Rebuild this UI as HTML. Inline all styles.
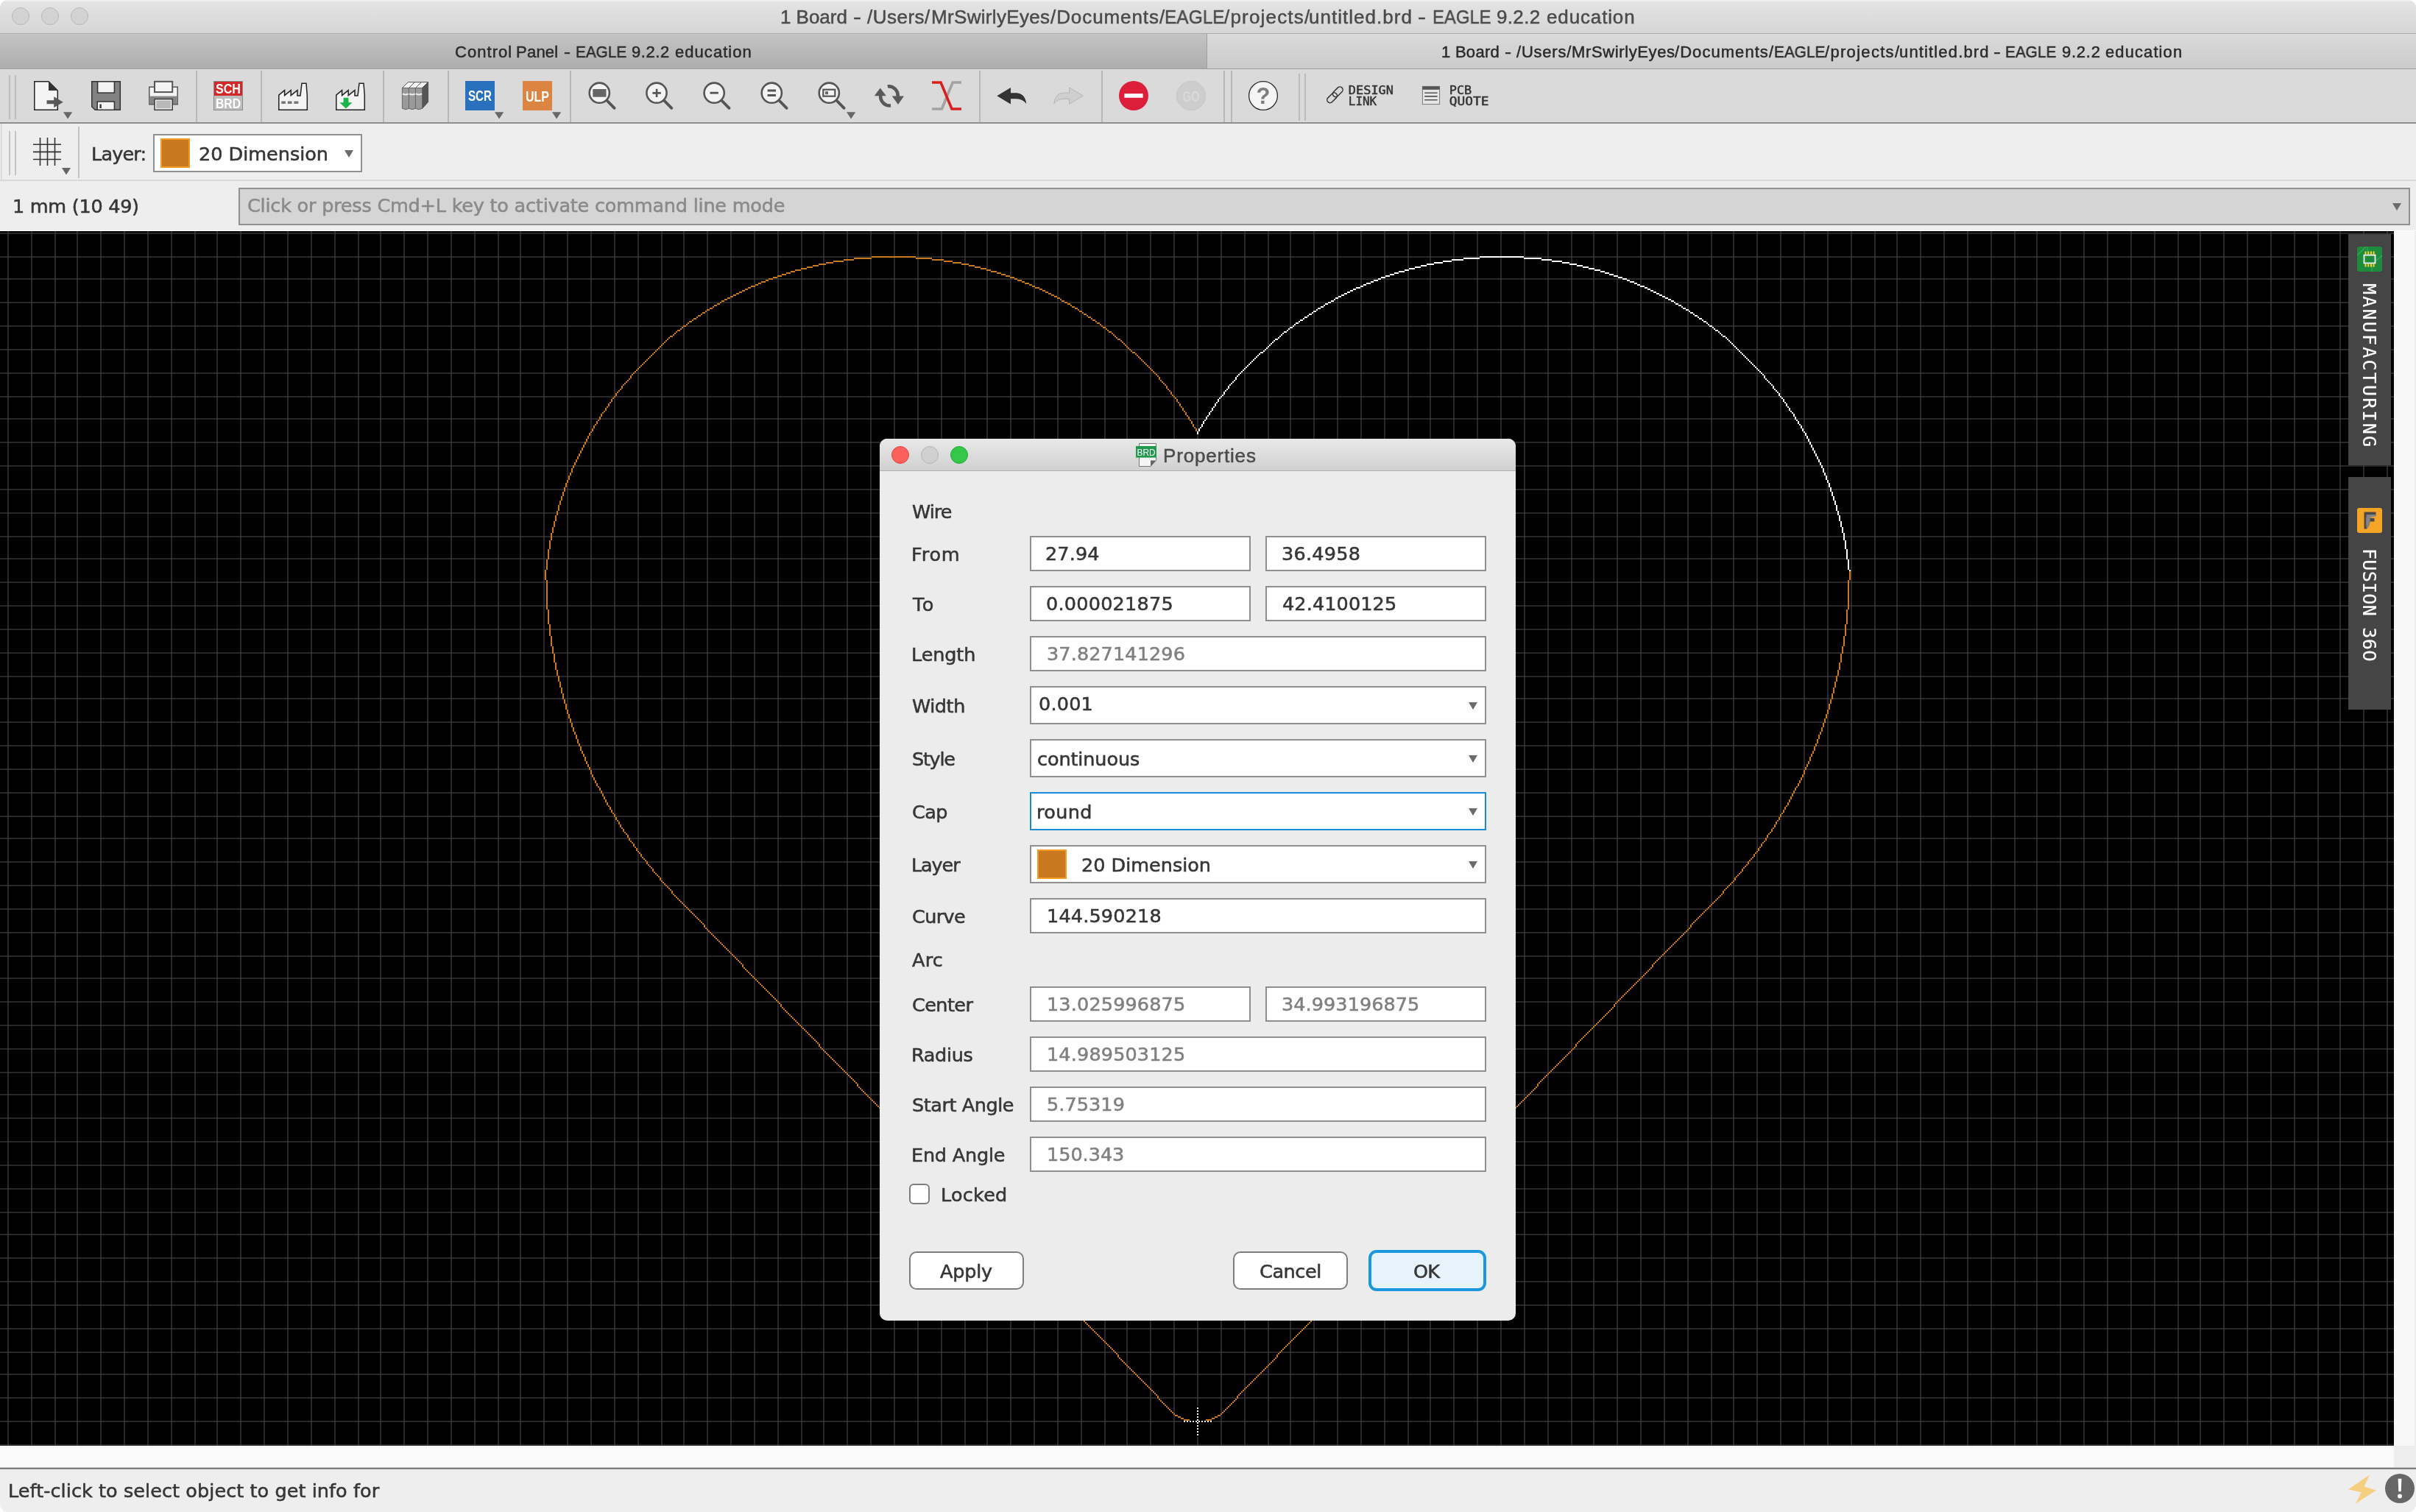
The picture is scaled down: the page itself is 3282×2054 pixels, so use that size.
<!DOCTYPE html><html lang="en"><head><meta charset="utf-8"><title>1 Board - EAGLE 9.2.2 education</title><style>
*{box-sizing:border-box;margin:0;padding:0}
html,body{width:3282px;height:2054px;overflow:hidden;background:#fff}
#win{position:absolute;left:0;top:0;width:3282px;height:2054px;overflow:hidden;border-radius:11px;background:#eee}
.a{position:absolute}
svg{will-change:transform}
.t{position:absolute;white-space:pre;line-height:1;will-change:transform}
.dv{font-family:'DejaVu Sans',sans-serif;-webkit-text-stroke:.55px currentColor}
.ls{font-family:'Liberation Sans',sans-serif;-webkit-text-stroke:.5px currentColor}
#titlebar{left:0;top:0;width:3282px;height:46px;background:linear-gradient(#f4f4f4 0,#e3e3e3 3px,#d6d6d6 45px,#adadad 45px)}
.tl{position:absolute;width:24px;height:24px;border-radius:50%;border:1px solid #b7b7b7;background:#d3d3d3;top:10px}
#tabL{left:0;top:46px;width:1640px;height:47px;background:linear-gradient(#c4c4c4,#adadad);border-right:1px solid #a1a1a1}
#tabR{left:1640px;top:46px;width:1642px;height:47px;background:linear-gradient(#dadada,#cbcbcb)}
#tabline{left:0;top:93px;width:3282px;height:1px;background:#9c9c9c}
#tb1{left:0;top:94px;width:3282px;height:74px;background:#dadada;border-bottom:2px solid #8f8f8f}
#tb2{left:0;top:168px;width:3282px;height:78px;background:#eee;border-bottom:2px solid #d9d9d9}
#cmdrow{left:0;top:246px;width:3282px;height:68px;background:#eee;border-bottom:1px solid #fff}
.combo{position:absolute;background:#fff;border:2px solid #909090}
.sw{position:absolute;width:40px;height:40px;background:#c8781e;border:2px solid #f59a23}
.edit{position:absolute;height:48px;background:#fff;border:2px solid #8f8f8f}
#cmdbox{left:324px;top:255px;width:2950px;height:51px;background:#d5d5d5;border:2px solid #909090}
.arr{position:absolute;width:0;height:0;border-left:6px solid transparent;border-right:6px solid transparent;border-top:10px solid #6b6b6b}
#vsb{left:3252px;top:314px;width:30px;height:1650px;background:#f8f8f8;border-right:2px solid #eee}
#hsb{left:0;top:1964px;width:3252px;height:30px;background:linear-gradient(#f4f4f4,#fbfbfb 4px,#fafafa)}
#corner{left:3252px;top:1964px;width:30px;height:30px;background:#ededed}
#stline{left:0;top:1993px;width:3282px;height:3px;background:linear-gradient(#c9c9c9 0,#c9c9c9 1px,#7d7d7d 1px,#7d7d7d 2.5px,#d0d0d0 3px)}
#status{left:0;top:1996px;width:3282px;height:58px;background:#eee}
.side{position:absolute;left:3190px;width:58px;background:#454545}
.side .ic{position:absolute;left:12px;width:34px;height:34px;border-radius:3px}
.dv0{font-family:'DejaVu Sans',sans-serif}
.vt{position:absolute;white-space:pre;font-family:'DejaVu Sans Mono','Liberation Mono',monospace;color:#fff;transform-origin:0 0;transform:rotate(90deg);line-height:1;will-change:transform;-webkit-text-stroke:.2px #fff}
#dlg{left:1195px;top:596px;width:864px;height:1198px;border-radius:10px;background:#ececec;overflow:hidden}
#dlgbar{left:0;top:0;width:864px;height:44px;background:linear-gradient(#e9e9e9,#d0d0d0);border-bottom:1px solid #b1b1b1}
.dot{position:absolute;width:24px;height:24px;border-radius:50%;top:606px}
.btn{position:absolute;height:52px;border-radius:10px;background:#fff;border:2px solid #7e7e7e}
#ok{left:1859px;top:1698px;width:160px;height:56px;border-radius:11px;background:#e6f3fb;border:4px solid #1a97dd}
#chk{left:1235px;top:1608px;width:28px;height:28px;border-radius:6px;background:#fff;border:2px solid #7e7e7e}
</style></head><body><div id="win">
<div id="titlebar" class="a"><i class="tl" style="left:16px"></i><i class="tl" style="left:56px"></i><i class="tl" style="left:96px"></i></div>
<div class="a" id="wtitle"><span class="t ls" style="left:1059.9px;top:10px;font-size:26px;color:#4b4b4b;letter-spacing:-0.03px;">1 Board </span><span class="t ls" style="left:1158.6px;top:10px;font-size:26px;color:#4b4b4b;transform:scaleX(1.2677);transform-origin:0 0;">- </span><span class="t ls" style="left:1178.4px;top:10px;font-size:26px;color:#4b4b4b;letter-spacing:0.49px;">/Users/</span><span class="t ls" style="left:1265.1px;top:10px;font-size:26px;color:#4b4b4b;letter-spacing:0.33px;">MrSwirlyEyes</span><span class="t ls" style="left:1426.7px;top:10px;font-size:26px;color:#4b4b4b;letter-spacing:0.92px;">/Documents/</span><span class="t ls" style="left:1581.7px;top:10px;font-size:26px;color:#4b4b4b;transform:scaleX(0.9408);transform-origin:0 0;">EAGLE</span><span class="t ls" style="left:1662.6px;top:10px;font-size:26px;color:#4b4b4b;letter-spacing:1.19px;">/projects/</span><span class="t ls" style="left:1778.2px;top:10px;font-size:26px;color:#4b4b4b;letter-spacing:1.03px;">untitled.brd </span><span class="t ls" style="left:1926.2px;top:10px;font-size:26px;color:#4b4b4b;transform:scaleX(1.2677);transform-origin:0 0;">- </span><span class="t ls" style="left:1945.5px;top:10px;font-size:26px;color:#4b4b4b;transform:scaleX(0.9182);transform-origin:0 0;">EAGLE </span><span class="t ls" style="left:2032.9px;top:10px;font-size:26px;color:#4b4b4b;letter-spacing:0.34px;">9.2.2 </span><span class="t ls" style="left:2101.0px;top:10px;font-size:26px;color:#4b4b4b;letter-spacing:0.86px;">education</span></div>
<div id="tabL" class="a"></div><div id="tabR" class="a"></div><div id="tabline" class="a"></div>
<div class="a" id="tab1t"><span class="t ls" style="left:618.4px;top:60px;font-size:22px;color:#2b2b2b;letter-spacing:1.05px;">Control </span><span class="t ls" style="left:701.4px;top:60px;font-size:22px;color:#2b2b2b;letter-spacing:0.24px;">Panel </span><span class="t ls" style="left:766.2px;top:60px;font-size:22px;color:#2b2b2b;transform:scaleX(1.2295);transform-origin:0 0;">- </span><span class="t ls" style="left:781.8px;top:60px;font-size:22px;color:#2b2b2b;transform:scaleX(0.9425);transform-origin:0 0;">EAGLE </span><span class="t ls" style="left:858.3px;top:60px;font-size:22px;color:#2b2b2b;letter-spacing:0.57px;">9.2.2 </span><span class="t ls" style="left:917.0px;top:60px;font-size:22px;color:#2b2b2b;letter-spacing:1.05px;">education</span></div>
<div class="a" id="tab2t"><span class="t ls" style="left:1958.2px;top:60px;font-size:22px;color:#2b2b2b;letter-spacing:0.28px;">1 Board </span><span class="t ls" style="left:2043.5px;top:60px;font-size:22px;color:#2b2b2b;transform:scaleX(1.2464);transform-origin:0 0;">- </span><span class="t ls" style="left:2060.2px;top:60px;font-size:22px;color:#2b2b2b;letter-spacing:0.77px;">/Users/</span><span class="t ls" style="left:2135.2px;top:60px;font-size:22px;color:#2b2b2b;letter-spacing:0.62px;">MrSwirlyEyes</span><span class="t ls" style="left:2275.4px;top:60px;font-size:22px;color:#2b2b2b;letter-spacing:1.05px;">/Documents/</span><span class="t ls" style="left:2409.6px;top:60px;font-size:22px;color:#2b2b2b;transform:scaleX(0.9453);transform-origin:0 0;">EAGLE</span><span class="t ls" style="left:2478.9px;top:60px;font-size:22px;color:#2b2b2b;letter-spacing:1.31px;">/projects/</span><span class="t ls" style="left:2579.6px;top:60px;font-size:22px;color:#2b2b2b;letter-spacing:1.15px;">untitled.brd </span><span class="t ls" style="left:2708.0px;top:60px;font-size:22px;color:#2b2b2b;transform:scaleX(1.3306);transform-origin:0 0;">- </span><span class="t ls" style="left:2724.4px;top:60px;font-size:22px;color:#2b2b2b;transform:scaleX(0.9439);transform-origin:0 0;">EAGLE </span><span class="t ls" style="left:2801.0px;top:60px;font-size:22px;color:#2b2b2b;letter-spacing:0.75px;">9.2.2 </span><span class="t ls" style="left:2859.8px;top:60px;font-size:22px;color:#2b2b2b;letter-spacing:1.09px;">education</span></div>
<div id="tb1" class="a"></div>
<svg class="a" style="left:0;top:94px" width="3282" height="72" viewBox="0 94 3282 72"><rect x="12" y="102" width="2" height="60" fill="#bcbcbc"/><rect x="20" y="102" width="2" height="60" fill="#bcbcbc"/><rect x="1764" y="100" width="2" height="64" fill="#bcbcbc"/><rect x="1772" y="100" width="2" height="64" fill="#bcbcbc"/><rect x="266" y="96" width="2" height="70" fill="#b9b9b9"/><rect x="354" y="96" width="2" height="70" fill="#b9b9b9"/><rect x="520" y="96" width="2" height="70" fill="#b9b9b9"/><rect x="608" y="96" width="2" height="70" fill="#b9b9b9"/><rect x="774" y="96" width="2" height="70" fill="#b9b9b9"/><rect x="1330" y="96" width="2" height="70" fill="#b9b9b9"/><rect x="1496" y="96" width="2" height="70" fill="#b9b9b9"/><rect x="1662" y="96" width="2" height="70" fill="#b9b9b9"/><rect x="1672" y="96" width="2" height="70" fill="#b9b9b9"/><path d="M46.8 110.8H66L78.3 123V149.3H46.8Z" fill="#f4f4f4" stroke="#222" stroke-width="1.5"/><path d="M66 110.8V123H78.3Z" fill="#333"/><path d="M63.5 136.2H73.2V131.3L85.8 138.7L73.2 146.2V141.2H63.5Z" fill="#595959"/><path d="M86 152.2h12.2l-6.1 9.4z" fill="#666"/><path d="M124.8 110.8H163.3V149.3H129.2L124.8 145Z" fill="#828282" stroke="#333" stroke-width="1.5"/><rect x="132.6" y="110.8" width="22.8" height="15.3" fill="#f3f3f3" stroke="#333" stroke-width="1.5"/><rect x="132.2" y="138" width="23.2" height="11.3" fill="#f3f3f3" stroke="#333" stroke-width="1.5"/><rect x="135.4" y="141.6" width="2.4" height="5.4" fill="#333"/><rect x="202.8" y="118.2" width="38.4" height="23.6" fill="#f3f3f3" stroke="#555" stroke-width="1.5"/><rect x="203.5" y="130.6" width="37" height="10.5" fill="#858585"/><rect x="210" y="110.8" width="24.2" height="14.3" fill="#f3f3f3" stroke="#555" stroke-width="2"/><rect x="210" y="134.6" width="24.2" height="14.7" fill="#f3f3f3" stroke="#444" stroke-width="1.6"/><rect x="212.2" y="136.6" width="19.8" height="10.6" fill="#b9b9b9"/><rect x="290" y="110" width="40" height="40" fill="#8a8a8a"/><rect x="291" y="111" width="38" height="19" fill="#d22828"/><rect x="291" y="130" width="38" height="19" fill="#bdbdbd"/><text x="310" y="127" font-family="'Liberation Sans',sans-serif" font-weight="700" font-size="17.5" fill="#fff" text-anchor="middle" textLength="34" lengthAdjust="spacingAndGlyphs">SCH</text><text x="310" y="147" font-family="'Liberation Sans',sans-serif" font-weight="700" font-size="17.5" fill="#fff" text-anchor="middle" textLength="34" lengthAdjust="spacingAndGlyphs">BRD</text><path d="M378.8 149.3V129.2L386.6 122.6V129.6L395.2 122.6V129.6L404 122.6V130H408L410 113.2H416L417.3 130V149.3Z" fill="#f3f3f3" stroke="#222" stroke-width="1.5" stroke-linejoin="miter"/><path d="M382.2 137.5h5.7v3.5h-5.7zM390.8 137.5h5.7v3.5h-5.7zM399.4 137.5h5.9v3.5h-5.9z" fill="#777"/><path d="M456.8 149.3V129.2L464.6 122.6V129.6L473.2 122.6V129.6L482 122.6V130H486L488 113.2H494L495.3 130V149.3Z" fill="#f3f3f3" stroke="#222" stroke-width="1.5" stroke-linejoin="miter"/><path d="M466.6 132.8h6.8v6.4h5l-8.5 8.4l-8.5-8.4h5.2z" fill="#1db44a"/><path d="M573.6 119.5L581.6 111.6V138.6L573.6 147.4Z" fill="#555" stroke="#555" stroke-width="1"/><path d="M546.4 119.5L554.4 111.6H563.4L555.6 119.5Z" fill="#f3f3f3" stroke="#555" stroke-width="1"/><path d="M546.4 119.5H555.6V147.2Q551.0 150.2 546.4 147.2Z" fill="#9a9a9a" stroke="#666" stroke-width="1"/><path d="M546.9 127.4Q551.0 129.6 555.1 127.4" stroke="#eee" stroke-width="2" fill="none"/><path d="M555.4 119.5L563.4 111.6H572.4L564.6 119.5Z" fill="#f3f3f3" stroke="#555" stroke-width="1"/><path d="M555.4 119.5H564.6V147.2Q560.0 150.2 555.4 147.2Z" fill="#9a9a9a" stroke="#666" stroke-width="1"/><path d="M555.9 127.4Q560.0 129.6 564.1 127.4" stroke="#eee" stroke-width="2" fill="none"/><path d="M564.4 119.5L572.4 111.6H581.4L573.6 119.5Z" fill="#f3f3f3" stroke="#555" stroke-width="1"/><path d="M564.4 119.5H573.6V147.2Q569.0 150.2 564.4 147.2Z" fill="#9a9a9a" stroke="#666" stroke-width="1"/><path d="M564.9 127.4Q569.0 129.6 573.1 127.4" stroke="#eee" stroke-width="2" fill="none"/><rect x="632" y="110" width="40" height="40" fill="#2a71bd"/><text x="652" y="137.4" font-family="'Liberation Sans',sans-serif" font-weight="700" font-size="19.5" fill="#fff" text-anchor="middle" textLength="32" lengthAdjust="spacingAndGlyphs">SCR</text><path d="M672 152.2h12.2l-6.1 9.4z" fill="#666"/><rect x="710" y="110" width="40" height="40" fill="#dc8441"/><text x="730" y="137.6" font-family="'Liberation Sans',sans-serif" font-weight="700" font-size="19.5" fill="#fff" text-anchor="middle" textLength="32" lengthAdjust="spacingAndGlyphs">ULP</text><path d="M750 152.2h12.2l-6.1 9.4z" fill="#666"/><g><circle cx="814.3" cy="126.2" r="13.6" fill="#f3f3f3" stroke="#555" stroke-width="2.6"/><path d="M824.9 137.0L834.5999999999999 146.8" stroke="#555" stroke-width="3.9" stroke-linecap="round"/><rect x="805.3" y="121" width="18.2" height="10.7" fill="#666"/></g><g><circle cx="892" cy="126.2" r="13.6" fill="#f3f3f3" stroke="#555" stroke-width="2.6"/><path d="M902.6 137.0L912.3 146.8" stroke="#555" stroke-width="3.9" stroke-linecap="round"/><path d="M886.4 126.4h11.4M892.1 120.7v11.4" stroke="#555" stroke-width="2.6"/></g><g><circle cx="970.2" cy="126.2" r="13.6" fill="#f3f3f3" stroke="#555" stroke-width="2.6"/><path d="M980.8000000000001 137.0L990.5 146.8" stroke="#555" stroke-width="3.9" stroke-linecap="round"/><path d="M964.5 126.2h11.4" stroke="#555" stroke-width="2.8"/></g><g><circle cx="1048.3" cy="126.2" r="13.6" fill="#f3f3f3" stroke="#555" stroke-width="2.6"/><path d="M1058.8999999999999 137.0L1068.6 146.8" stroke="#555" stroke-width="3.9" stroke-linecap="round"/><path d="M1042.6 123h11.4M1042.6 129.5h11.4" stroke="#555" stroke-width="2.8"/></g><g><circle cx="1126.3" cy="126.2" r="13.6" fill="#f3f3f3" stroke="#555" stroke-width="2.6"/><path d="M1136.8999999999999 137.0L1146.6 146.8" stroke="#555" stroke-width="3.9" stroke-linecap="round"/><rect x="1118.3" y="121.7" width="16" height="9" fill="#f3f3f3" stroke="#555" stroke-width="2.2"/><rect x="1121" y="124.2" width="4" height="4" fill="#666"/></g><path d="M1150 152.2h12.2l-6.1 9.4z" fill="#666"/><g fill="none" stroke="#595959" stroke-width="4.6"><path d="M1205.8 117.3A12.6 12.6 0 0 1 1219.6 131"/><path d="M1210 143.4A12.6 12.6 0 0 1 1196.2 129.6"/></g><path d="M1187.8 130.2L1195.7 119.4L1203.8 130.2Z" fill="#595959"/><path d="M1211.8 130.6L1220 142L1228 130.6Z" fill="#595959"/><path d="M1306 112H1294.2L1279.4 148H1266" stroke="#a2a2a2" stroke-width="3.6" fill="none"/><path d="M1266 112H1278L1293 148H1306" stroke="#d8201f" stroke-width="3.6" fill="none"/><path d="M1354.3 130.2L1373 119V126.2H1381Q1392.5 127 1394.3 141Q1389 134.4 1381 134.3H1373V141.4Z" fill="#333"/><path d="M1471.3 130.2L1452.6 119V126.2H1444.6Q1433.1 127 1431.8 141Q1436.6 134.4 1444.6 134.3H1452.6V141.4Z" fill="#cfcfcf" stroke="#b4b4b4" stroke-width="1"/><circle cx="1540" cy="130" r="20" fill="#dc1e3a"/><rect x="1527.4" y="127.2" width="25.2" height="5.6" fill="#fff"/><circle cx="1618" cy="130" r="19.6" fill="#cdcdcd" stroke="#c6c6c6" stroke-width="1"/><text x="1618" y="137.6" font-family="'Liberation Sans',sans-serif" font-weight="700" font-size="21" fill="#dadada" text-anchor="middle" textLength="23" lengthAdjust="spacingAndGlyphs">GO</text><circle cx="1716" cy="130" r="19.4" fill="#f5f5f5" stroke="#2a2a2a" stroke-width="1.3"/><text x="1716" y="141.4" font-family="'Liberation Sans',sans-serif" font-weight="700" font-size="31" fill="#7d7d7d" text-anchor="middle">?</text><g fill="none" stroke="#333" stroke-width="1.5"><rect x="-8" y="-4" width="16" height="8" rx="4" transform="translate(1817.3 124.8) rotate(-45)"/><rect x="-8" y="-4" width="16" height="8" rx="4" transform="translate(1809.6 132.9) rotate(-45)"/></g><text font-family="'DejaVu Sans Mono','Liberation Mono',monospace" font-size="15.2" fill="#333" stroke="#333" stroke-width=".45"><tspan x="1831.8" y="127.6" textLength="61.2" lengthAdjust="spacingAndGlyphs">DESIGN</tspan><tspan x="1831.8" y="142.6" textLength="38.4" lengthAdjust="spacingAndGlyphs">LINK</tspan></text><rect x="1932.4" y="117.4" width="23.2" height="24.2" fill="#e6e6e6" stroke="#777" stroke-width="1"/><rect x="1932.4" y="117.4" width="23.2" height="4.4" fill="#555"/><path d="M1935.2 126.2h17.4M1935.2 130.9h17.4M1935.2 135.7h17.4" stroke="#555" stroke-width="1.6"/><text font-family="'DejaVu Sans Mono','Liberation Mono',monospace" font-size="15.2" fill="#333" stroke="#333" stroke-width=".45"><tspan x="1968.8" y="127.6" textLength="30.4" lengthAdjust="spacingAndGlyphs">PCB</tspan><tspan x="1968.8" y="142.6" textLength="53.8" lengthAdjust="spacingAndGlyphs">QUOTE</tspan></text></svg>
<div id="tb2" class="a"></div>
<svg class="a" style="left:0;top:168px" width="3282" height="76" viewBox="0 168 3282 76"><rect x="12" y="178" width="2" height="60" fill="#c4c4c4"/><rect x="20" y="178" width="2" height="60" fill="#c4c4c4"/><rect x="106" y="172" width="2" height="70" fill="#c4c4c4"/><rect x="1" y="168" width="1.5" height="76" fill="#d6d6d6"/><path d="M54.5 187v38M64.5 187v38M74.5 187v38M45 196.3h38M45 206.4h38M45 216.5h38" stroke="#333" stroke-width="1.6" fill="none"/><path d="M84 228.1h12l-6.0 9.3z" fill="#666"/></svg>
<span class="t dv" style="left:124.0px;top:197px;font-size:25.5px;color:#363636;letter-spacing:-0.82px;">Layer:</span>
<div class="combo" style="left:208px;top:182px;width:284px;height:52px"></div><i class="sw" style="left:218px;top:188px"></i>
<span class="t dv" style="left:269.6px;top:197px;font-size:25.5px;color:#363636;letter-spacing:-0.01px;">20 Dimension</span>
<i class="arr" style="left:468px;top:204px"></i>
<div id="cmdrow" class="a"></div><div id="cmdbox" class="a"></div>
<span class="t dv" style="left:16.6px;top:268px;font-size:25.5px;color:#363636;letter-spacing:-0.27px;">1 mm (10 49)</span>
<span class="t dv" style="left:336.0px;top:267px;font-size:25.5px;color:#8a8a8a;letter-spacing:-0.21px;">Click or press Cmd+L key to activate command line mode</span>
<i class="arr" style="left:3250px;top:276px"></i>
<svg class="cv" width="3252" height="1650" viewBox="0 0 3252 1650" shape-rendering="crispEdges" style="position:absolute;left:0px;top:314px;background:#000"><path d="M11 0V1650M43 0V1650M75 0V1650M105 0V1650M137 0V1650M169 0V1650M201 0V1650M233 0V1650M265 0V1650M295 0V1650M327 0V1650M359 0V1650M391 0V1650M423 0V1650M455 0V1650M487 0V1650M517 0V1650M549 0V1650M581 0V1650M613 0V1650M645 0V1650M677 0V1650M707 0V1650M739 0V1650M771 0V1650M803 0V1650M835 0V1650M867 0V1650M899 0V1650M929 0V1650M961 0V1650M993 0V1650M1025 0V1650M1057 0V1650M1089 0V1650M1119 0V1650M1151 0V1650M1183 0V1650M1215 0V1650M1247 0V1650M1279 0V1650M1311 0V1650M1341 0V1650M1373 0V1650M1405 0V1650M1437 0V1650M1469 0V1650M1501 0V1650M1531 0V1650M1563 0V1650M1595 0V1650M1627 0V1650M1659 0V1650M1691 0V1650M1723 0V1650M1753 0V1650M1785 0V1650M1817 0V1650M1849 0V1650M1881 0V1650M1913 0V1650M1943 0V1650M1975 0V1650M2007 0V1650M2039 0V1650M2071 0V1650M2103 0V1650M2135 0V1650M2165 0V1650M2197 0V1650M2229 0V1650M2261 0V1650M2293 0V1650M2325 0V1650M2355 0V1650M2387 0V1650M2419 0V1650M2451 0V1650M2483 0V1650M2515 0V1650M2547 0V1650M2577 0V1650M2609 0V1650M2641 0V1650M2673 0V1650M2705 0V1650M2737 0V1650M2767 0V1650M2799 0V1650M2831 0V1650M2863 0V1650M2895 0V1650M2927 0V1650M2959 0V1650M2989 0V1650M3021 0V1650M3053 0V1650M3085 0V1650M3117 0V1650M3149 0V1650M3179 0V1650M3211 0V1650M3243 0V1650" stroke="#282828" stroke-width="2" fill="none"/><path d="M0 3H3252M0 35H3252M0 65H3252M0 97H3252M0 129H3252M0 161H3252M0 193H3252M0 225H3252M0 255H3252M0 287H3252M0 319H3252M0 351H3252M0 383H3252M0 415H3252M0 445H3252M0 477H3252M0 509H3252M0 541H3252M0 573H3252M0 605H3252M0 635H3252M0 667H3252M0 699H3252M0 731H3252M0 763H3252M0 795H3252M0 825H3252M0 857H3252M0 889H3252M0 921H3252M0 953H3252M0 985H3252M0 1015H3252M0 1047H3252M0 1079H3252M0 1111H3252M0 1143H3252M0 1173H3252M0 1205H3252M0 1237H3252M0 1269H3252M0 1301H3252M0 1333H3252M0 1363H3252M0 1395H3252M0 1427H3252M0 1459H3252M0 1491H3252M0 1523H3252M0 1553H3252M0 1585H3252M0 1617H3252M0 1649H3252" stroke="#434343" stroke-opacity=".6" stroke-width="2" fill="none"/><path d="M740 460h2v2h-2zm2 -14h2v14h-2zm2 -14h2v14h-2zm2 -12h2v12h-2zm2 -10h2v10h-2zm2 -8h2v8h-2zm2 -8h2v8h-2zm2 -8h2v8h-2zm2 -6h2v6h-2zm2 -8h2v8h-2zm2 -6h2v6h-2zm2 -6h2v6h-2zm2 -6h2v6h-2zm2 -6h2v6h-2zm2 -6h2v6h-2zm2 -4h2v4h-2zm2 -6h2v6h-2zm2 -4h2v4h-2zm2 -6h2v6h-2zm2 -4h2v4h-2zm2 -4h2v4h-2zm2 -4h2v4h-2zm2 -4h2v4h-2zm2 -4h2v4h-2zm2 -4h2v4h-2zm2 -4h2v4h-2zm2 -4h2v4h-2zm2 -4h2v4h-2zm2 -4h2v4h-2zm2 -4h2v4h-2zm2 -4h2v4h-2zm2 -2h2v2h-2zm2 -4h2v4h-2zm2 -4h2v4h-2zm2 -2h2v2h-2zm2 -4h2v4h-2zm2 -2h2v2h-2zm2 -4h2v4h-2zm2 -4h2v4h-2zm2 -2h2v2h-2zm2 -2h2v2h-2zm2 -4h2v4h-2zm2 -2h2v2h-2zm2 -4h2v4h-2zm2 -2h2v2h-2zm2 -4h2v4h-2zm2 -2h2v2h-2zm2 -2h2v2h-2zm2 -4h2v4h-2zm2 -2h2v2h-2zm2 -2h2v2h-2zm2 -2h2v2h-2zm2 -4h2v4h-2zm2 -2h2v2h-2zm2 -2h2v2h-2zm2 -2h2v2h-2zm2 -2h2v2h-2zm2 -2h2v2h-2zm2 -4h2v4h-2zm2 -2h2v2h-2zm2 -2h2v2h-2zm2 -2h2v2h-2zm2 -2h2v2h-2zm2 -2h2v2h-2zm2 -2h2v2h-2zm2 -2h2v2h-2zm2 -2h2v2h-2zm2 -2h2v2h-2zm2 -2h2v2h-2zm2 -2h2v2h-2zm2 -2h2v2h-2zm2 -2h2v2h-2zm2 -2h2v2h-2zm2 -2h2v2h-2zm2 -2h2v2h-2zm2 -2h2v2h-2zm2 -2h2v2h-2zm2 -2h2v2h-2zm2 -2h2v2h-2zm2 -2h2v2h-2zm2 -2h2v2h-2zm2 -2h2v2h-2zm2 -2h2v2h-2zm2 -2h2v2h-2zm2 -2h2v2h-2zm2 -2h4v2h-4zm4 -2h2v2h-2zm2 -2h2v2h-2zm2 -2h2v2h-2zm2 -2h4v2h-4zm4 -2h2v2h-2zm2 -2h2v2h-2zm2 -2h4v2h-4zm4 -2h2v2h-2zm2 -2h2v2h-2zm2 -2h4v2h-4zm4 -2h2v2h-2zm2 -2h4v2h-4zm4 -2h2v2h-2zm2 -2h4v2h-4zm4 -2h2v2h-2zm2 -2h4v2h-4zm4 -2h2v2h-2zm2 -2h4v2h-4zm4 -2h4v2h-4zm4 -2h2v2h-2zm2 -2h4v2h-4zm4 -2h4v2h-4zm4 -2h2v2h-2zm2 -2h4v2h-4zm4 -2h4v2h-4zm4 -2h4v2h-4zm4 -2h4v2h-4zm4 -2h4v2h-4zm4 -2h4v2h-4zm4 -2h4v2h-4zm4 -2h4v2h-4zm4 -2h4v2h-4zm4 -2h4v2h-4zm4 -2h6v2h-6zm6 -2h4v2h-4zm4 -2h4v2h-4zm4 -2h6v2h-6zm6 -2h4v2h-4zm4 -2h6v2h-6zm6 -2h6v2h-6zm6 -2h6v2h-6zm6 -2h6v2h-6zm6 -2h6v2h-6zm6 -2h6v2h-6zm6 -2h8v2h-8zm8 -2h8v2h-8zm8 -2h8v2h-8zm8 -2h8v2h-8zm8 -2h10v2h-10zm10 -2h10v2h-10zm10 -2h14v2h-14zm14 -2h14v2h-14zm14 -2h24v2h-24zm24 -2h60v2h-60zm60 2h22v2h-22zm22 2h16v2h-16zm16 2h12v2h-12zm12 2h12v2h-12zm12 2h10v2h-10zm10 2h8v2h-8zm8 2h8v2h-8zm8 2h8v2h-8zm8 2h6v2h-6zm6 2h8v2h-8zm8 2h6v2h-6zm6 2h6v2h-6zm6 2h6v2h-6zm6 2h6v2h-6zm6 2h4v2h-4zm4 2h6v2h-6zm6 2h4v2h-4zm4 2h6v2h-6zm6 2h4v2h-4zm4 2h4v2h-4zm4 2h6v2h-6zm6 2h4v2h-4zm4 2h4v2h-4zm4 2h4v2h-4zm4 2h4v2h-4zm4 2h4v2h-4zm4 2h4v2h-4zm4 2h4v2h-4zm4 2h2v2h-2zm2 2h4v2h-4zm4 2h4v2h-4zm4 2h4v2h-4zm4 2h2v2h-2zm2 2h4v2h-4zm4 2h4v2h-4zm4 2h2v2h-2zm2 2h4v2h-4zm4 2h2v2h-2zm2 2h4v2h-4zm4 2h2v2h-2zm2 2h4v2h-4zm4 2h2v2h-2zm2 2h4v2h-4zm4 2h2v2h-2zm2 2h4v2h-4zm4 2h2v2h-2zm2 2h2v2h-2zm2 2h4v2h-4zm4 2h2v2h-2zm2 2h2v2h-2zm2 2h4v2h-4zm4 2h2v2h-2zm2 2h2v2h-2zm2 2h2v2h-2zm2 2h2v2h-2zm2 2h4v2h-4zm4 2h2v2h-2zm2 2h2v2h-2zm2 2h2v2h-2zm2 2h2v2h-2zm2 2h2v2h-2zm2 2h2v2h-2zm2 2h2v2h-2zm2 2h2v2h-2zm2 2h4v2h-4zm4 2h2v2h-2zm2 2h2v2h-2zm2 2h2v2h-2zm2 2h2v2h-2zm2 2h2v2h-2zm2 2h2v2h-2zm2 2h2v2h-2zm2 2h2v2h-2zm2 2h2v2h-2zm2 2h2v2h-2zm2 2h2v2h-2zm2 2h2v2h-2zm2 2h2v2h-2zm2 2h2v2h-2zm2 2h2v2h-2zm2 2h2v2h-2zm2 2h2v4h-2zm2 4h2v2h-2zm2 2h2v2h-2zm2 2h2v2h-2zm2 2h2v2h-2zm2 2h2v4h-2zm2 4h2v2h-2zm2 2h2v2h-2zm2 2h2v4h-2zm2 4h2v2h-2zm2 2h2v2h-2zm2 2h2v2h-2zm2 2h2v4h-2zm2 4h2v2h-2zm2 2h2v4h-2zm2 4h2v2h-2zm2 2h2v4h-2zm2 4h2v2h-2zm2 2h2v4h-2zm2 4h2v2h-2zm2 2h2v4h-2zm2 4h2v2h-2zm2 2h2v4h-2zm2 4h2v4h-2zm2 4h2v2h-2zm2 2h2v4h-2zm2 4h2v4h-2zm-886 188h2v14h-2zm2 14h2v40h-2zm2 40h2v20h-2zm2 20h2v16h-2zm2 16h2v14h-2zm2 14h2v10h-2zm2 10h2v12h-2zm2 12h2v10h-2zm2 10h2v8h-2zm2 8h2v8h-2zm2 8h2v8h-2zm2 8h2v8h-2zm2 8h2v8h-2zm2 8h2v6h-2zm2 6h2v8h-2zm2 8h2v6h-2zm2 6h2v6h-2zm2 6h2v6h-2zm2 6h2v6h-2zm2 6h2v6h-2zm2 6h2v4h-2zm2 4h2v6h-2zm2 6h2v6h-2zm2 6h2v4h-2zm2 4h2v6h-2zm2 6h2v4h-2zm2 4h2v4h-2zm2 4h2v6h-2zm2 6h2v4h-2zm2 4h2v4h-2zm2 4h2v4h-2zm2 4h2v6h-2zm2 6h2v4h-2zm2 4h2v4h-2zm2 4h2v4h-2zm2 4h2v4h-2zm2 4h2v2h-2zm2 2h2v4h-2zm2 4h2v4h-2zm2 4h2v4h-2zm2 4h2v4h-2zm2 4h2v4h-2zm2 4h2v4h-2zm2 4h2v2h-2zm2 2h2v4h-2zm2 4h2v4h-2zm2 4h2v2h-2zm2 2h2v4h-2zm2 4h2v4h-2zm2 4h2v2h-2zm2 2h2v4h-2zm2 4h2v4h-2zm2 4h2v2h-2zm2 2h2v4h-2zm2 4h2v2h-2zm2 2h2v2h-2zm2 2h2v4h-2zm2 4h2v4h-2zm2 4h2v2h-2zm2 2h2v2h-2zm2 2h2v4h-2zm2 4h2v2h-2zm2 2h2v4h-2zm2 4h2v2h-2zm2 2h2v2h-2zm2 2h2v4h-2zm2 4h2v2h-2zm2 2h2v2h-2zm2 2h2v2h-2zm2 2h2v4h-2zm2 4h2v2h-2zm2 2h2v2h-2zm2 2h2v2h-2zm2 2h2v4h-2zm2 4h2v2h-2zm2 2h2v2h-2zm2 2h2v2h-2zm2 2h2v2h-2zm2 2h2v4h-2zm2 4h2v2h-2zm2 2h2v2h-2zm2 2h2v2h-2zm2 2h2v2h-2zm2 2h2v2h-2zm2 2h2v2h-2zm2 2h2v2h-2zm2 2h2v4h-2zm2 4h2v2h-2zm2 2h2v2h-2zm2 2h2v2h-2zm2 2h2v2h-2zm2 2h2v2h-2zm2 2h2v2h-2zm2 2h2v2h-2zm2 2h2v2h-2zm2 2h2v2h-2zm2 2h2v2h-2zm2 2h2v2h-2zm2 2h2v2h-2zm2 2h2v2h-2zm2 2h2v2h-2zm2 2h2v2h-2zm2 2h2v2h-2zm2 2h2v2h-2zm2 2h2v2h-2zm2 2h2v2h-2zm2 2h2v2h-2zm2 2h2v2h-2zm2 2h2v4h-2zm2 4h2v2h-2zm2 2h2v2h-2zm2 2h2v2h-2zm2 2h2v2h-2zm2 2h2v2h-2zm2 2h2v2h-2zm2 2h2v2h-2zm2 2h2v2h-2zm2 2h2v2h-2zm2 2h2v2h-2zm2 2h2v2h-2zm2 2h2v2h-2zm2 2h2v2h-2zm2 2h2v2h-2zm2 2h2v2h-2zm2 2h2v2h-2zm2 2h2v2h-2zm2 2h2v2h-2zm2 2h2v2h-2zm2 2h2v2h-2zm2 2h2v2h-2zm2 2h2v2h-2zm2 2h2v2h-2zm2 2h2v2h-2zm2 2h2v2h-2zm2 2h2v4h-2zm2 4h2v2h-2zm2 2h2v2h-2zm2 2h2v2h-2zm2 2h2v2h-2zm2 2h2v2h-2zm2 2h2v2h-2zm2 2h2v2h-2zm2 2h2v2h-2zm2 2h2v2h-2zm2 2h2v2h-2zm2 2h2v2h-2zm2 2h2v2h-2zm2 2h2v2h-2zm2 2h2v2h-2zm2 2h2v2h-2zm2 2h2v2h-2zm2 2h2v2h-2zm2 2h2v2h-2zm2 2h2v2h-2zm2 2h2v2h-2zm2 2h2v2h-2zm2 2h2v2h-2zm2 2h2v2h-2zm2 2h2v2h-2zm2 2h2v2h-2zm2 2h2v4h-2zm2 4h2v2h-2zm2 2h2v2h-2zm2 2h2v2h-2zm2 2h2v2h-2zm2 2h2v2h-2zm2 2h2v2h-2zm2 2h2v2h-2zm2 2h2v2h-2zm2 2h2v2h-2zm2 2h2v2h-2zm2 2h2v2h-2zm2 2h2v2h-2zm2 2h2v2h-2zm2 2h2v2h-2zm2 2h2v2h-2zm2 2h2v2h-2zm2 2h2v2h-2zm2 2h2v2h-2zm2 2h2v2h-2zm2 2h2v2h-2zm2 2h2v2h-2zm2 2h2v2h-2zm2 2h2v2h-2zm2 2h2v2h-2zm2 2h2v2h-2zm2 2h2v4h-2zm2 4h2v2h-2zm2 2h2v2h-2zm2 2h2v2h-2zm2 2h2v2h-2zm2 2h2v2h-2zm2 2h2v2h-2zm2 2h2v2h-2zm2 2h2v2h-2zm2 2h2v2h-2zm2 2h2v2h-2zm2 2h2v2h-2zm2 2h2v2h-2zm2 2h2v2h-2zm2 2h2v2h-2zm2 2h2v2h-2zm2 2h2v2h-2zm2 2h2v2h-2zm2 2h2v2h-2zm2 2h2v2h-2zm2 2h2v2h-2zm2 2h2v2h-2zm2 2h2v2h-2zm2 2h2v2h-2zm2 2h2v2h-2zm2 2h2v2h-2zm2 2h2v4h-2zm2 4h2v2h-2zm2 2h2v2h-2zm2 2h2v2h-2zm2 2h2v2h-2zm2 2h2v2h-2zm2 2h2v2h-2zm2 2h2v2h-2zm2 2h2v2h-2zm2 2h2v2h-2zm2 2h2v2h-2zm2 2h2v2h-2zm2 2h2v2h-2zm2 2h2v2h-2zm2 2h2v2h-2zm2 2h2v2h-2zm2 2h2v2h-2zm2 2h2v2h-2zm2 2h2v2h-2zm2 2h2v2h-2zm2 2h2v2h-2zm2 2h2v2h-2zm2 2h2v2h-2zm2 2h2v2h-2zm2 2h2v2h-2zm2 2h2v2h-2zm2 2h2v4h-2zm2 4h2v2h-2zm2 2h2v2h-2zm2 2h2v2h-2zm2 2h2v2h-2zm2 2h2v2h-2zm2 2h2v2h-2zm2 2h2v2h-2zm2 2h2v2h-2zm2 2h2v2h-2zm2 2h2v2h-2zm2 2h2v2h-2zm2 2h2v2h-2zm2 2h2v2h-2zm2 2h2v2h-2zm2 2h2v2h-2zm2 2h2v2h-2zm2 2h2v2h-2zm2 2h2v2h-2zm2 2h2v2h-2zm2 2h2v2h-2zm2 2h2v2h-2zm2 2h2v2h-2zm2 2h2v2h-2zm2 2h2v2h-2zm2 2h2v2h-2zm2 2h2v4h-2zm2 4h2v2h-2zm2 2h2v2h-2zm2 2h2v2h-2zm2 2h2v2h-2zm2 2h2v2h-2zm2 2h2v2h-2zm2 2h2v2h-2zm2 2h2v2h-2zm2 2h2v2h-2zm2 2h2v2h-2zm2 2h2v2h-2zm2 2h2v2h-2zm2 2h2v2h-2zm2 2h2v2h-2zm2 2h2v2h-2zm2 2h2v2h-2zm2 2h2v2h-2zm2 2h2v2h-2zm2 2h2v2h-2zm2 2h2v2h-2zm2 2h2v2h-2zm2 2h2v2h-2zm2 2h2v2h-2zm2 2h2v2h-2zm2 2h2v2h-2zm2 2h2v4h-2zm2 4h2v2h-2zm2 2h2v2h-2zm2 2h2v2h-2zm2 2h2v2h-2zm2 2h2v2h-2zm2 2h2v2h-2zm2 2h2v2h-2zm2 2h2v2h-2zm2 2h2v2h-2zm2 2h2v2h-2zm2 2h2v2h-2zm2 2h2v2h-2zm2 2h2v2h-2zm2 2h2v2h-2zm2 2h2v2h-2zm2 2h2v2h-2zm2 2h2v2h-2zm2 2h2v2h-2zm2 2h2v2h-2zm2 2h2v2h-2zm2 2h2v2h-2zm2 2h2v2h-2zm2 2h2v2h-2zm2 2h2v2h-2zm2 2h2v2h-2zm2 2h2v2h-2zm2 2h2v4h-2zm2 4h2v2h-2zm2 2h2v2h-2zm2 2h2v2h-2zm2 2h2v2h-2zm2 2h2v2h-2zm2 2h2v2h-2zm2 2h2v2h-2zm2 2h2v2h-2zm2 2h2v2h-2zm2 2h2v2h-2zm2 2h2v2h-2zm2 2h2v2h-2zm2 2h2v2h-2zm2 2h2v2h-2zm2 2h2v2h-2zm2 2h2v2h-2zm2 2h2v2h-2zm2 2h2v2h-2zm2 2h2v2h-2zm2 2h2v2h-2zm2 2h2v2h-2zm2 2h2v2h-2zm2 2h2v2h-2zm2 2h2v2h-2zm2 2h2v2h-2zm2 2h2v4h-2zm2 4h2v2h-2zm2 2h2v2h-2zm2 2h2v2h-2zm2 2h2v2h-2zm2 2h2v2h-2zm2 2h2v2h-2zm2 2h2v2h-2zm2 2h2v2h-2zm2 2h2v2h-2zm2 2h2v2h-2zm2 2h2v2h-2zm2 2h2v2h-2zm2 2h2v2h-2zm2 2h2v2h-2zm2 2h2v2h-2zm2 2h2v2h-2zm2 2h2v2h-2zm2 2h2v2h-2zm2 2h2v2h-2zm2 2h2v4h-2zm2 4h2v2h-2zm2 2h2v2h-2zm2 2h2v2h-2zm2 2h2v2h-2zm2 2h2v2h-2zm2 2h2v2h-2zm2 2h2v2h-2zm2 2h2v2h-2zm2 2h2v2h-2zm2 2h2v2h-2zm2 2h2v2h-2zm2 2h2v2h-2zm2 2h2v2h-2zm2 2h2v2h-2zm2 2h2v2h-2zm2 2h2v2h-2zm2 2h2v2h-2zm2 2h2v2h-2zm2 2h2v2h-2zm2 2h2v2h-2zm2 2h2v2h-2zm2 2h2v2h-2zm2 2h2v2h-2zm2 2h2v2h-2zm2 2h2v2h-2zm2 2h2v4h-2zm2 4h2v2h-2zm2 2h2v2h-2zm2 2h2v2h-2zm2 2h2v2h-2zm2 2h2v2h-2zm2 2h2v2h-2zm2 2h2v2h-2zm2 2h2v2h-2zm2 2h2v2h-2zm2 2h2v2h-2zm2 2h2v2h-2zm2 2h2v2h-2zm2 2h2v2h-2zm2 2h2v2h-2zm2 2h2v2h-2zm2 2h2v2h-2zm2 2h2v2h-2zm2 2h2v2h-2zm2 2h2v2h-2zm2 2h2v2h-2zm2 2h2v2h-2zm2 2h2v2h-2zm2 2h2v2h-2zm2 2h2v2h-2zm2 2h2v2h-2zm2 2h2v2h-2zm2 2h2v4h-2zm2 4h2v2h-2zm2 2h2v2h-2zm2 2h2v2h-2zm2 2h2v2h-2zm2 2h2v2h-2zm2 2h2v2h-2zm2 2h2v2h-2zm2 2h2v2h-2zm2 2h2v2h-2zm2 2h2v2h-2zm2 2h2v2h-2zm2 2h4v2h-4zm4 2h4v2h-4zm4 2h4v2h-4zm4 2h8v2h-8zm8 2h12v2h-12zm896 -1156h2v14h-2zm-2 14h2v40h-2zm-2 40h2v20h-2zm-2 20h2v16h-2zm-2 16h2v14h-2zm-2 14h2v10h-2zm-2 10h2v12h-2zm-2 12h2v10h-2zm-2 10h2v8h-2zm-2 8h2v8h-2zm-2 8h2v8h-2zm-2 8h2v8h-2zm-2 8h2v8h-2zm-2 8h2v6h-2zm-2 6h2v8h-2zm-2 8h2v6h-2zm-2 6h2v6h-2zm-2 6h2v6h-2zm-2 6h2v6h-2zm-2 6h2v6h-2zm-2 6h2v4h-2zm-2 4h2v6h-2zm-2 6h2v6h-2zm-2 6h2v4h-2zm-2 4h2v6h-2zm-2 6h2v4h-2zm-2 4h2v4h-2zm-2 4h2v6h-2zm-2 6h2v4h-2zm-2 4h2v4h-2zm-2 4h2v4h-2zm-2 4h2v6h-2zm-2 6h2v4h-2zm-2 4h2v4h-2zm-2 4h2v4h-2zm-2 4h2v4h-2zm-2 4h2v2h-2zm-2 2h2v4h-2zm-2 4h2v4h-2zm-2 4h2v4h-2zm-2 4h2v4h-2zm-2 4h2v4h-2zm-2 4h2v4h-2zm-2 4h2v2h-2zm-2 2h2v4h-2zm-2 4h2v4h-2zm-2 4h2v2h-2zm-2 2h2v4h-2zm-2 4h2v4h-2zm-2 4h2v2h-2zm-2 2h2v4h-2zm-2 4h2v4h-2zm-2 4h2v2h-2zm-2 2h2v4h-2zm-2 4h2v2h-2zm-2 2h2v2h-2zm-2 2h2v4h-2zm-2 4h2v4h-2zm-2 4h2v2h-2zm-2 2h2v2h-2zm-2 2h2v4h-2zm-2 4h2v2h-2zm-2 2h2v4h-2zm-2 4h2v2h-2zm-2 2h2v2h-2zm-2 2h2v4h-2zm-2 4h2v2h-2zm-2 2h2v2h-2zm-2 2h2v2h-2zm-2 2h2v4h-2zm-2 4h2v2h-2zm-2 2h2v2h-2zm-2 2h2v2h-2zm-2 2h2v4h-2zm-2 4h2v2h-2zm-2 2h2v2h-2zm-2 2h2v2h-2zm-2 2h2v2h-2zm-2 2h2v4h-2zm-2 4h2v2h-2zm-2 2h2v2h-2zm-2 2h2v2h-2zm-2 2h2v2h-2zm-2 2h2v2h-2zm-2 2h2v2h-2zm-2 2h2v2h-2zm-2 2h2v4h-2zm-2 4h2v2h-2zm-2 2h2v2h-2zm-2 2h2v2h-2zm-2 2h2v2h-2zm-2 2h2v2h-2zm-2 2h2v2h-2zm-2 2h2v2h-2zm-2 2h2v2h-2zm-2 2h2v2h-2zm-2 2h2v2h-2zm-2 2h2v2h-2zm-2 2h2v2h-2zm-2 2h2v2h-2zm-2 2h2v2h-2zm-2 2h2v2h-2zm-2 2h2v2h-2zm-2 2h2v2h-2zm-2 2h2v2h-2zm-2 2h2v2h-2zm-2 2h2v2h-2zm-2 2h2v2h-2zm-2 2h2v4h-2zm-2 4h2v2h-2zm-2 2h2v2h-2zm-2 2h2v2h-2zm-2 2h2v2h-2zm-2 2h2v2h-2zm-2 2h2v2h-2zm-2 2h2v2h-2zm-2 2h2v2h-2zm-2 2h2v2h-2zm-2 2h2v2h-2zm-2 2h2v2h-2zm-2 2h2v2h-2zm-2 2h2v2h-2zm-2 2h2v2h-2zm-2 2h2v2h-2zm-2 2h2v2h-2zm-2 2h2v2h-2zm-2 2h2v2h-2zm-2 2h2v2h-2zm-2 2h2v2h-2zm-2 2h2v2h-2zm-2 2h2v2h-2zm-2 2h2v2h-2zm-2 2h2v2h-2zm-2 2h2v2h-2zm-2 2h2v4h-2zm-2 4h2v2h-2zm-2 2h2v2h-2zm-2 2h2v2h-2zm-2 2h2v2h-2zm-2 2h2v2h-2zm-2 2h2v2h-2zm-2 2h2v2h-2zm-2 2h2v2h-2zm-2 2h2v2h-2zm-2 2h2v2h-2zm-2 2h2v2h-2zm-2 2h2v2h-2zm-2 2h2v2h-2zm-2 2h2v2h-2zm-2 2h2v2h-2zm-2 2h2v2h-2zm-2 2h2v2h-2zm-2 2h2v2h-2zm-2 2h2v2h-2zm-2 2h2v2h-2zm-2 2h2v2h-2zm-2 2h2v2h-2zm-2 2h2v2h-2zm-2 2h2v2h-2zm-2 2h2v2h-2zm-2 2h2v4h-2zm-2 4h2v2h-2zm-2 2h2v2h-2zm-2 2h2v2h-2zm-2 2h2v2h-2zm-2 2h2v2h-2zm-2 2h2v2h-2zm-2 2h2v2h-2zm-2 2h2v2h-2zm-2 2h2v2h-2zm-2 2h2v2h-2zm-2 2h2v2h-2zm-2 2h2v2h-2zm-2 2h2v2h-2zm-2 2h2v2h-2zm-2 2h2v2h-2zm-2 2h2v2h-2zm-2 2h2v2h-2zm-2 2h2v2h-2zm-2 2h2v2h-2zm-2 2h2v2h-2zm-2 2h2v2h-2zm-2 2h2v2h-2zm-2 2h2v2h-2zm-2 2h2v2h-2zm-2 2h2v2h-2zm-2 2h2v4h-2zm-2 4h2v2h-2zm-2 2h2v2h-2zm-2 2h2v2h-2zm-2 2h2v2h-2zm-2 2h2v2h-2zm-2 2h2v2h-2zm-2 2h2v2h-2zm-2 2h2v2h-2zm-2 2h2v2h-2zm-2 2h2v2h-2zm-2 2h2v2h-2zm-2 2h2v2h-2zm-2 2h2v2h-2zm-2 2h2v2h-2zm-2 2h2v2h-2zm-2 2h2v2h-2zm-2 2h2v2h-2zm-2 2h2v2h-2zm-2 2h2v2h-2zm-2 2h2v2h-2zm-2 2h2v2h-2zm-2 2h2v2h-2zm-2 2h2v2h-2zm-2 2h2v2h-2zm-2 2h2v2h-2zm-2 2h2v4h-2zm-2 4h2v2h-2zm-2 2h2v2h-2zm-2 2h2v2h-2zm-2 2h2v2h-2zm-2 2h2v2h-2zm-2 2h2v2h-2zm-2 2h2v2h-2zm-2 2h2v2h-2zm-2 2h2v2h-2zm-2 2h2v2h-2zm-2 2h2v2h-2zm-2 2h2v2h-2zm-2 2h2v2h-2zm-2 2h2v2h-2zm-2 2h2v2h-2zm-2 2h2v2h-2zm-2 2h2v2h-2zm-2 2h2v2h-2zm-2 2h2v2h-2zm-2 2h2v2h-2zm-2 2h2v2h-2zm-2 2h2v2h-2zm-2 2h2v2h-2zm-2 2h2v2h-2zm-2 2h2v2h-2zm-2 2h2v4h-2zm-2 4h2v2h-2zm-2 2h2v2h-2zm-2 2h2v2h-2zm-2 2h2v2h-2zm-2 2h2v2h-2zm-2 2h2v2h-2zm-2 2h2v2h-2zm-2 2h2v2h-2zm-2 2h2v2h-2zm-2 2h2v2h-2zm-2 2h2v2h-2zm-2 2h2v2h-2zm-2 2h2v2h-2zm-2 2h2v2h-2zm-2 2h2v2h-2zm-2 2h2v2h-2zm-2 2h2v2h-2zm-2 2h2v2h-2zm-2 2h2v2h-2zm-2 2h2v2h-2zm-2 2h2v2h-2zm-2 2h2v2h-2zm-2 2h2v2h-2zm-2 2h2v2h-2zm-2 2h2v2h-2zm-2 2h2v4h-2zm-2 4h2v2h-2zm-2 2h2v2h-2zm-2 2h2v2h-2zm-2 2h2v2h-2zm-2 2h2v2h-2zm-2 2h2v2h-2zm-2 2h2v2h-2zm-2 2h2v2h-2zm-2 2h2v2h-2zm-2 2h2v2h-2zm-2 2h2v2h-2zm-2 2h2v2h-2zm-2 2h2v2h-2zm-2 2h2v2h-2zm-2 2h2v2h-2zm-2 2h2v2h-2zm-2 2h2v2h-2zm-2 2h2v2h-2zm-2 2h2v2h-2zm-2 2h2v2h-2zm-2 2h2v2h-2zm-2 2h2v2h-2zm-2 2h2v2h-2zm-2 2h2v2h-2zm-2 2h2v2h-2zm-2 2h2v4h-2zm-2 4h2v2h-2zm-2 2h2v2h-2zm-2 2h2v2h-2zm-2 2h2v2h-2zm-2 2h2v2h-2zm-2 2h2v2h-2zm-2 2h2v2h-2zm-2 2h2v2h-2zm-2 2h2v2h-2zm-2 2h2v2h-2zm-2 2h2v2h-2zm-2 2h2v2h-2zm-2 2h2v2h-2zm-2 2h2v2h-2zm-2 2h2v2h-2zm-2 2h2v2h-2zm-2 2h2v2h-2zm-2 2h2v2h-2zm-2 2h2v2h-2zm-2 2h2v2h-2zm-2 2h2v2h-2zm-2 2h2v2h-2zm-2 2h2v2h-2zm-2 2h2v2h-2zm-2 2h2v2h-2zm-2 2h2v2h-2zm-2 2h2v4h-2zm-2 4h2v2h-2zm-2 2h2v2h-2zm-2 2h2v2h-2zm-2 2h2v2h-2zm-2 2h2v2h-2zm-2 2h2v2h-2zm-2 2h2v2h-2zm-2 2h2v2h-2zm-2 2h2v2h-2zm-2 2h2v2h-2zm-2 2h2v2h-2zm-2 2h2v2h-2zm-2 2h2v2h-2zm-2 2h2v2h-2zm-2 2h2v2h-2zm-2 2h2v2h-2zm-2 2h2v2h-2zm-2 2h2v2h-2zm-2 2h2v2h-2zm-2 2h2v2h-2zm-2 2h2v2h-2zm-2 2h2v2h-2zm-2 2h2v2h-2zm-2 2h2v2h-2zm-2 2h2v2h-2zm-2 2h2v4h-2zm-2 4h2v2h-2zm-2 2h2v2h-2zm-2 2h2v2h-2zm-2 2h2v2h-2zm-2 2h2v2h-2zm-2 2h2v2h-2zm-2 2h2v2h-2zm-2 2h2v2h-2zm-2 2h2v2h-2zm-2 2h2v2h-2zm-2 2h2v2h-2zm-2 2h2v2h-2zm-2 2h2v2h-2zm-2 2h2v2h-2zm-2 2h2v2h-2zm-2 2h2v2h-2zm-2 2h2v2h-2zm-2 2h2v2h-2zm-2 2h2v2h-2zm-2 2h2v4h-2zm-2 4h2v2h-2zm-2 2h2v2h-2zm-2 2h2v2h-2zm-2 2h2v2h-2zm-2 2h2v2h-2zm-2 2h2v2h-2zm-2 2h2v2h-2zm-2 2h2v2h-2zm-2 2h2v2h-2zm-2 2h2v2h-2zm-2 2h2v2h-2zm-2 2h2v2h-2zm-2 2h2v2h-2zm-2 2h2v2h-2zm-2 2h2v2h-2zm-2 2h2v2h-2zm-2 2h2v2h-2zm-2 2h2v2h-2zm-2 2h2v2h-2zm-2 2h2v2h-2zm-2 2h2v2h-2zm-2 2h2v2h-2zm-2 2h2v2h-2zm-2 2h2v2h-2zm-2 2h2v2h-2zm-2 2h2v4h-2zm-2 4h2v2h-2zm-2 2h2v2h-2zm-2 2h2v2h-2zm-2 2h2v2h-2zm-2 2h2v2h-2zm-2 2h2v2h-2zm-2 2h2v2h-2zm-2 2h2v2h-2zm-2 2h2v2h-2zm-2 2h2v2h-2zm-2 2h2v2h-2zm-2 2h2v2h-2zm-2 2h2v2h-2zm-2 2h2v2h-2zm-2 2h2v2h-2zm-2 2h2v2h-2zm-2 2h2v2h-2zm-2 2h2v2h-2zm-2 2h2v2h-2zm-2 2h2v2h-2zm-2 2h2v2h-2zm-2 2h2v2h-2zm-2 2h2v2h-2zm-2 2h2v2h-2zm-2 2h2v2h-2zm-2 2h2v2h-2zm-2 2h2v4h-2zm-2 4h2v2h-2zm-2 2h2v2h-2zm-2 2h2v2h-2zm-2 2h2v2h-2zm-2 2h2v2h-2zm-2 2h2v2h-2zm-2 2h2v2h-2zm-2 2h2v2h-2zm-2 2h2v2h-2zm-2 2h2v2h-2zm-2 2h2v2h-2zm-4 2h4v2h-4zm-4 2h4v2h-4zm-4 2h4v2h-4zm-8 2h8v2h-8zm-12 2h12v2h-12z" fill="#c8781e"/><path d="M2512 460h2v2h-2zm-2 -14h2v14h-2zm-2 -14h2v14h-2zm-2 -12h2v12h-2zm-2 -10h2v10h-2zm-2 -8h2v8h-2zm-2 -8h2v8h-2zm-2 -8h2v8h-2zm-2 -6h2v6h-2zm-2 -8h2v8h-2zm-2 -6h2v6h-2zm-2 -6h2v6h-2zm-2 -6h2v6h-2zm-2 -6h2v6h-2zm-2 -6h2v6h-2zm-2 -4h2v4h-2zm-2 -6h2v6h-2zm-2 -4h2v4h-2zm-2 -6h2v6h-2zm-2 -4h2v4h-2zm-2 -4h2v4h-2zm-2 -4h2v4h-2zm-2 -4h2v4h-2zm-2 -4h2v4h-2zm-2 -4h2v4h-2zm-2 -4h2v4h-2zm-2 -4h2v4h-2zm-2 -4h2v4h-2zm-2 -4h2v4h-2zm-2 -4h2v4h-2zm-2 -4h2v4h-2zm-2 -2h2v2h-2zm-2 -4h2v4h-2zm-2 -4h2v4h-2zm-2 -2h2v2h-2zm-2 -4h2v4h-2zm-2 -2h2v2h-2zm-2 -4h2v4h-2zm-2 -4h2v4h-2zm-2 -2h2v2h-2zm-2 -2h2v2h-2zm-2 -4h2v4h-2zm-2 -2h2v2h-2zm-2 -4h2v4h-2zm-2 -2h2v2h-2zm-2 -4h2v4h-2zm-2 -2h2v2h-2zm-2 -2h2v2h-2zm-2 -4h2v4h-2zm-2 -2h2v2h-2zm-2 -2h2v2h-2zm-2 -2h2v2h-2zm-2 -4h2v4h-2zm-2 -2h2v2h-2zm-2 -2h2v2h-2zm-2 -2h2v2h-2zm-2 -2h2v2h-2zm-2 -2h2v2h-2zm-2 -4h2v4h-2zm-2 -2h2v2h-2zm-2 -2h2v2h-2zm-2 -2h2v2h-2zm-2 -2h2v2h-2zm-2 -2h2v2h-2zm-2 -2h2v2h-2zm-2 -2h2v2h-2zm-2 -2h2v2h-2zm-2 -2h2v2h-2zm-2 -2h2v2h-2zm-2 -2h2v2h-2zm-2 -2h2v2h-2zm-2 -2h2v2h-2zm-2 -2h2v2h-2zm-2 -2h2v2h-2zm-2 -2h2v2h-2zm-2 -2h2v2h-2zm-2 -2h2v2h-2zm-2 -2h2v2h-2zm-2 -2h2v2h-2zm-2 -2h2v2h-2zm-2 -2h2v2h-2zm-2 -2h2v2h-2zm-2 -2h2v2h-2zm-2 -2h2v2h-2zm-2 -2h2v2h-2zm-4 -2h4v2h-4zm-2 -2h2v2h-2zm-2 -2h2v2h-2zm-2 -2h2v2h-2zm-4 -2h4v2h-4zm-2 -2h2v2h-2zm-2 -2h2v2h-2zm-4 -2h4v2h-4zm-2 -2h2v2h-2zm-2 -2h2v2h-2zm-4 -2h4v2h-4zm-2 -2h2v2h-2zm-4 -2h4v2h-4zm-2 -2h2v2h-2zm-4 -2h4v2h-4zm-2 -2h2v2h-2zm-4 -2h4v2h-4zm-2 -2h2v2h-2zm-4 -2h4v2h-4zm-4 -2h4v2h-4zm-2 -2h2v2h-2zm-4 -2h4v2h-4zm-4 -2h4v2h-4zm-2 -2h2v2h-2zm-4 -2h4v2h-4zm-4 -2h4v2h-4zm-4 -2h4v2h-4zm-4 -2h4v2h-4zm-4 -2h4v2h-4zm-4 -2h4v2h-4zm-4 -2h4v2h-4zm-4 -2h4v2h-4zm-4 -2h4v2h-4zm-4 -2h4v2h-4zm-6 -2h6v2h-6zm-4 -2h4v2h-4zm-4 -2h4v2h-4zm-6 -2h6v2h-6zm-4 -2h4v2h-4zm-6 -2h6v2h-6zm-6 -2h6v2h-6zm-6 -2h6v2h-6zm-6 -2h6v2h-6zm-6 -2h6v2h-6zm-6 -2h6v2h-6zm-8 -2h8v2h-8zm-8 -2h8v2h-8zm-8 -2h8v2h-8zm-8 -2h8v2h-8zm-10 -2h10v2h-10zm-10 -2h10v2h-10zm-14 -2h14v2h-14zm-14 -2h14v2h-14zm-24 -2h24v2h-24zm-60 -2h60v2h-60zm-22 2h22v2h-22zm-16 2h16v2h-16zm-12 2h12v2h-12zm-12 2h12v2h-12zm-10 2h10v2h-10zm-8 2h8v2h-8zm-8 2h8v2h-8zm-8 2h8v2h-8zm-6 2h6v2h-6zm-8 2h8v2h-8zm-6 2h6v2h-6zm-6 2h6v2h-6zm-6 2h6v2h-6zm-6 2h6v2h-6zm-4 2h4v2h-4zm-6 2h6v2h-6zm-4 2h4v2h-4zm-6 2h6v2h-6zm-4 2h4v2h-4zm-4 2h4v2h-4zm-6 2h6v2h-6zm-4 2h4v2h-4zm-4 2h4v2h-4zm-4 2h4v2h-4zm-4 2h4v2h-4zm-4 2h4v2h-4zm-4 2h4v2h-4zm-4 2h4v2h-4zm-2 2h2v2h-2zm-4 2h4v2h-4zm-4 2h4v2h-4zm-4 2h4v2h-4zm-2 2h2v2h-2zm-4 2h4v2h-4zm-4 2h4v2h-4zm-2 2h2v2h-2zm-4 2h4v2h-4zm-2 2h2v2h-2zm-4 2h4v2h-4zm-2 2h2v2h-2zm-4 2h4v2h-4zm-2 2h2v2h-2zm-4 2h4v2h-4zm-2 2h2v2h-2zm-4 2h4v2h-4zm-2 2h2v2h-2zm-2 2h2v2h-2zm-4 2h4v2h-4zm-2 2h2v2h-2zm-2 2h2v2h-2zm-4 2h4v2h-4zm-2 2h2v2h-2zm-2 2h2v2h-2zm-2 2h2v2h-2zm-2 2h2v2h-2zm-4 2h4v2h-4zm-2 2h2v2h-2zm-2 2h2v2h-2zm-2 2h2v2h-2zm-2 2h2v2h-2zm-2 2h2v2h-2zm-2 2h2v2h-2zm-2 2h2v2h-2zm-2 2h2v2h-2zm-4 2h4v2h-4zm-2 2h2v2h-2zm-2 2h2v2h-2zm-2 2h2v2h-2zm-2 2h2v2h-2zm-2 2h2v2h-2zm-2 2h2v2h-2zm-2 2h2v2h-2zm-2 2h2v2h-2zm-2 2h2v2h-2zm-2 2h2v2h-2zm-2 2h2v2h-2zm-2 2h2v2h-2zm-2 2h2v2h-2zm-2 2h2v2h-2zm-2 2h2v2h-2zm-2 2h2v2h-2zm-2 2h2v4h-2zm-2 4h2v2h-2zm-2 2h2v2h-2zm-2 2h2v2h-2zm-2 2h2v2h-2zm-2 2h2v4h-2zm-2 4h2v2h-2zm-2 2h2v2h-2zm-2 2h2v4h-2zm-2 4h2v2h-2zm-2 2h2v2h-2zm-2 2h2v2h-2zm-2 2h2v4h-2zm-2 4h2v2h-2zm-2 2h2v4h-2zm-2 4h2v2h-2zm-2 2h2v4h-2zm-2 4h2v2h-2zm-2 2h2v4h-2zm-2 4h2v2h-2zm-2 2h2v4h-2zm-2 4h2v2h-2zm-2 2h2v4h-2zm-2 4h2v4h-2zm-2 4h2v2h-2zm-2 2h2v4h-2zm-2 4h2v4h-2z" fill="#fff"/><path d="M1606 1616h42v2h-42zM1626 1596h2v42h-2z" fill="#000"/><path d="M1628 1616h2v2h-2zM1626 1618h2v2h-2zM1624 1616h2v2h-2zM1626 1614h2v2h-2zM1632 1616h2v2h-2zM1626 1622h2v2h-2zM1620 1616h2v2h-2zM1626 1610h2v2h-2zM1636 1616h2v2h-2zM1626 1626h2v2h-2zM1616 1616h2v2h-2zM1626 1606h2v2h-2zM1640 1616h2v2h-2zM1626 1630h2v2h-2zM1612 1616h2v2h-2zM1626 1602h2v2h-2zM1644 1616h2v2h-2zM1626 1634h2v2h-2zM1608 1616h2v2h-2zM1626 1598h2v2h-2z" fill="#fff"/></svg>
<div id="vsb" class="a"></div><div id="hsb" class="a"></div><div id="corner" class="a"></div>
<div class="side" style="top:318px;height:314px"><i class="ic" style="top:17px;background:#1e8a3c"></i></div>
<svg class="a" style="left:3202px;top:335px" width="34" height="34" viewBox="0 0 34 34"><path d="M0 12L12 0M20 34V24L34 12M14 0V8" stroke="#2fae55" stroke-width="1.2" fill="none"/><rect x="9.5" y="11.5" width="15" height="11" fill="#1e8a3c" stroke="#fff" stroke-width="1.8"/><path d="M11.5 6.5v4M15.3 6.5v4M19 6.5v4M22.6 6.5v4M11.5 23.5v4M15.3 23.5v4M19 23.5v4M22.6 23.5v4" stroke="#ffd42a" stroke-width="2"/></svg>
<span class="vt" style="left:3231px;top:385px;font-size:25px;letter-spacing:2.2px">MANUFACTURING</span>
<div class="side" style="top:648px;height:316px"><i class="ic" style="top:42px;background:#f5a525"></i></div>
<svg class="a" style="left:3202px;top:690px" width="34" height="34" viewBox="0 0 34 34"><path d="M9.5 5.5H25.5V11H17.5V14H23.5V18.5H17.5Q17 24.5 13 28.5H9.5Z" fill="#4a4a4a"/><path d="M13 9Q11 18 13 28.5Q17 24.5 17.5 18.5V14L25.5 11V9Z" fill="#8a8a8a" opacity=".9"/></svg>
<span class="vt" style="left:3231px;top:744.7px;font-size:25px;letter-spacing:.28px">FUSION 36<span class="dv0" style="display:inline-block;width:15.05px;text-align:center;letter-spacing:0">0</span></span>
<div id="stline" class="a"></div><div id="status" class="a"></div>
<span class="t dv" style="left:11.3px;top:2013px;font-size:25.5px;color:#363636;letter-spacing:0.07px;">Left-click to select object to get info for</span>
<svg class="a" style="left:3180px;top:1998px" width="102" height="54" viewBox="3180 1998 102 54"><path d="M3219 2003.6L3190 2023.3L3207.8 2027.2L3200 2042.6L3228 2024.4L3211.6 2019.6Z" fill="#f5ce7f"/><circle cx="3260" cy="2022" r="20" fill="#666"/><path d="M3257.6 2008.8h4.8l-.7 17.4h-3.4z" fill="#fff"/><circle cx="3260" cy="2032.6" r="3" fill="#fff"/></svg>
<div id="dlg" class="a"><div id="dlgbar" class="a"></div></div>
<i class="dot" style="left:1211px;background:#fc605b;border:1px solid #e0443e"></i><i class="dot" style="left:1251px;background:#d0d0d0;border:1px solid #b4b4b4"></i><i class="dot" style="left:1291px;background:#34c84a;border:1px solid #24a93a"></i>
<svg class="a" style="left:1541px;top:600px" width="34" height="36" viewBox="1541 600 34 36"><path d="M1547.5 602.5H1570.5V625.5L1563 633.5H1547.5Z" fill="#f4f4f4" stroke="#777" stroke-width="1"/><path d="M1563 633.5V625.5H1570.5Z" fill="#666"/><rect x="1543" y="606" width="28" height="15.6" fill="#1f9a4c"/><text x="1557" y="618.8" font-family="'Liberation Sans',sans-serif" font-size="13" fill="#fff" text-anchor="middle" textLength="25" lengthAdjust="spacingAndGlyphs">BRD</text></svg>
<span class="t ls" style="left:1580.4px;top:606px;font-size:26px;color:#4b4b4b;letter-spacing:0.82px;">Properties</span>
<span class="t dv" style="left:1238.8px;top:683px;font-size:25.5px;color:#363636;letter-spacing:-0.94px;">Wire</span>
<span class="t dv" style="left:1238.3px;top:741px;font-size:25.5px;color:#363636;letter-spacing:0.82px;">From</span>
<span class="t dv" style="left:1239.9px;top:809px;font-size:25.5px;color:#363636;letter-spacing:1.4px;">To</span>
<span class="t dv" style="left:1238.3px;top:877px;font-size:25.5px;color:#363636;letter-spacing:-0.11px;">Length</span>
<span class="t dv" style="left:1238.8px;top:947px;font-size:25.5px;color:#363636;letter-spacing:-0.44px;">Width</span>
<span class="t dv" style="left:1238.6px;top:1019px;font-size:25.5px;color:#363636;letter-spacing:-1.29px;">Style</span>
<span class="t dv" style="left:1238.8px;top:1091px;font-size:25.5px;color:#363636;letter-spacing:-0.56px;">Cap</span>
<span class="t dv" style="left:1238.3px;top:1163px;font-size:25.5px;color:#363636;letter-spacing:-1.12px;">Layer</span>
<span class="t dv" style="left:1238.8px;top:1233px;font-size:25.5px;color:#363636;letter-spacing:-0.63px;">Curve</span>
<span class="t dv" style="left:1239.4px;top:1292px;font-size:25.5px;color:#363636;letter-spacing:0.19px;">Arc</span>
<span class="t dv" style="left:1238.8px;top:1353px;font-size:25.5px;color:#363636;letter-spacing:-0.58px;">Center</span>
<span class="t dv" style="left:1238.3px;top:1421px;font-size:25.5px;color:#363636;letter-spacing:-0.35px;">Radius</span>
<span class="t dv" style="left:1238.6px;top:1489px;font-size:25.5px;color:#363636;letter-spacing:-0.45px;">Start Angle</span>
<span class="t dv" style="left:1238.3px;top:1557px;font-size:25.5px;color:#363636;letter-spacing:-0.21px;">End Angle</span>
<span class="t dv" style="left:1278.0px;top:1611px;font-size:25.5px;color:#363636;letter-spacing:0.23px;">Locked</span>
<div class="edit" style="left:1399px;top:728px;width:300px"></div>
<div class="edit" style="left:1719px;top:728px;width:300px"></div>
<div class="edit" style="left:1399px;top:796px;width:300px"></div>
<div class="edit" style="left:1719px;top:796px;width:300px"></div>
<div class="edit" style="left:1399px;top:864px;width:620px"></div>
<div class="combo" style="left:1399px;top:932px;width:620px;height:52px;"></div><i class="arr" style="left:1995px;top:954px"></i>
<div class="combo" style="left:1399px;top:1004px;width:620px;height:52px;"></div><i class="arr" style="left:1995px;top:1026px"></i>
<div class="combo" style="left:1399px;top:1076px;width:620px;height:52px;border-color:#1a8ad9"></div><i class="arr" style="left:1995px;top:1098px"></i>
<div class="combo" style="left:1399px;top:1148px;width:620px;height:52px;"></div><i class="arr" style="left:1995px;top:1170px"></i>
<i class="sw" style="left:1409px;top:1154px"></i>
<div class="edit" style="left:1399px;top:1220px;width:620px"></div>
<div class="edit" style="left:1399px;top:1340px;width:300px"></div>
<div class="edit" style="left:1719px;top:1340px;width:300px"></div>
<div class="edit" style="left:1399px;top:1408px;width:620px"></div>
<div class="edit" style="left:1399px;top:1476px;width:620px"></div>
<div class="edit" style="left:1399px;top:1544px;width:620px"></div>
<span class="t dv" style="left:1420.4px;top:740px;font-size:25.5px;color:#363636;letter-spacing:0.13px;">27.94</span>
<span class="t dv" style="left:1741.0px;top:740px;font-size:25.5px;color:#363636;letter-spacing:0.25px;">36.4958</span>
<span class="t dv" style="left:1420.6px;top:808px;font-size:25.5px;color:#363636;letter-spacing:0.23px;">0.000021875</span>
<span class="t dv" style="left:1741.5px;top:808px;font-size:25.5px;color:#363636;letter-spacing:0.11px;">42.4100125</span>
<span class="t dv" style="left:1421.9px;top:876px;font-size:25.5px;color:#808080;letter-spacing:0.12px;">37.827141296</span>
<span class="t dv" style="left:1410.9px;top:944px;font-size:25.5px;color:#363636;letter-spacing:0.2px;">0.001</span>
<span class="t dv" style="left:1408.9px;top:1019px;font-size:25.5px;color:#363636;letter-spacing:-0.11px;">continuous</span>
<span class="t dv" style="left:1408.4px;top:1091px;font-size:25.5px;color:#363636;letter-spacing:0.38px;">round</span>
<span class="t dv" style="left:1469.0px;top:1163px;font-size:25.5px;color:#363636;letter-spacing:-0.01px;">20 Dimension</span>
<span class="t dv" style="left:1421.6px;top:1232px;font-size:25.5px;color:#363636;letter-spacing:0.17px;">144.590218</span>
<span class="t dv" style="left:1421.6px;top:1352px;font-size:25.5px;color:#808080;letter-spacing:0.15px;">13.025996875</span>
<span class="t dv" style="left:1741.4px;top:1352px;font-size:25.5px;color:#808080;letter-spacing:0.07px;">34.993196875</span>
<span class="t dv" style="left:1421.6px;top:1420px;font-size:25.5px;color:#808080;letter-spacing:0.15px;">14.989503125</span>
<span class="t dv" style="left:1421.8px;top:1488px;font-size:25.5px;color:#808080;letter-spacing:0.07px;">5.75319</span>
<span class="t dv" style="left:1421.6px;top:1556px;font-size:25.5px;color:#808080;letter-spacing:-0.02px;">150.343</span>
<div id="chk" class="a"></div>
<div class="btn" style="left:1235px;top:1700px;width:156px"></div><div class="btn" style="left:1675px;top:1700px;width:156px"></div><div id="ok" class="a"></div>
<span class="t dv" style="left:1277.4px;top:1715px;font-size:25.5px;color:#363636;letter-spacing:-0.22px;">Apply</span>
<span class="t dv" style="left:1711.0px;top:1715px;font-size:25.5px;color:#363636;letter-spacing:-0.43px;">Cancel</span>
<span class="t dv" style="left:1919.8px;top:1715px;font-size:25.5px;color:#363636;letter-spacing:-0.72px;">OK</span>
</div></body></html>
